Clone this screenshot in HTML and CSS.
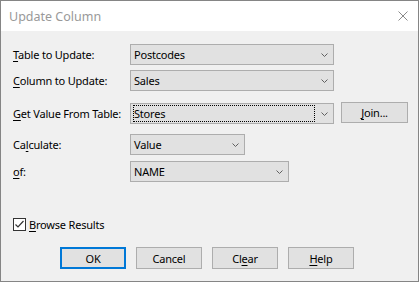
FILE: index.html
```html
<!DOCTYPE html>
<html>
<head>
<meta charset="utf-8">
<link rel="stylesheet" href="styles.css">
</head>
<body>
<div class="window">
  <div class="titlebar">
    <span class="title">Update Column</span>
    <svg class="close" width="10" height="10" viewBox="0 0 10 10"><path d="M0.5 0.5 L9.5 9.5 M9.5 0.5 L0.5 9.5" stroke="#8a8a8a" stroke-width="1" fill="none"/></svg>
  </div>
  <div class="content">
    <div class="row r1">
      <span class="lbl"><u>T</u>able to Update:</span>
      <div class="combo w-wide"><span class="val">Postcodes</span><svg class="chev" width="7" height="4" viewBox="0 0 7 4"><path d="M0.5 0.5 L3.5 3.5 L6.5 0.5" stroke="#606060" fill="none"/></svg></div>
    </div>
    <div class="row r2">
      <span class="lbl"><u>C</u>olumn to Update:</span>
      <div class="combo w-wide"><span class="val">Sales</span><svg class="chev" width="7" height="4" viewBox="0 0 7 4"><path d="M0.5 0.5 L3.5 3.5 L6.5 0.5" stroke="#606060" fill="none"/></svg></div>
    </div>
    <div class="row r3">
      <span class="lbl"><u>G</u>et Value From Table:</span>
      <div class="combo w-wide"><span class="val focus">Stores</span><svg class="chev" width="7" height="4" viewBox="0 0 7 4"><path d="M0.5 0.5 L3.5 3.5 L6.5 0.5" stroke="#606060" fill="none"/></svg></div>
      <button class="btn join"><u>J</u>oin...</button>
    </div>
    <div class="row r4">
      <span class="lbl">Ca<u>l</u>culate:</span>
      <div class="combo w-small"><span class="val">Value</span><svg class="chev" width="7" height="4" viewBox="0 0 7 4"><path d="M0.5 0.5 L3.5 3.5 L6.5 0.5" stroke="#606060" fill="none"/></svg></div>
    </div>
    <div class="row r5">
      <span class="lbl"><u>o</u>f:</span>
      <div class="combo w-mid"><span class="val">NAME</span><svg class="chev" width="7" height="4" viewBox="0 0 7 4"><path d="M0.5 0.5 L3.5 3.5 L6.5 0.5" stroke="#606060" fill="none"/></svg></div>
    </div>
    <div class="check-row">
      <span class="checkbox"><svg width="11" height="11" viewBox="0 0 11 11"><path d="M1.5 5.5 L4 8 L9.5 2" stroke="#333" stroke-width="1.2" fill="none"/></svg></span>
      <span class="check-lbl"><u>B</u>rowse Results</span>
    </div>
    <div class="buttons">
      <button class="btn default">OK</button>
      <button class="btn">Cancel</button>
      <button class="btn">Cl<u>e</u>ar</button>
      <button class="btn"><u>H</u>elp</button>
    </div>
  </div>
</div>
</body>
</html>
```
FILE: styles.css
```css
* { box-sizing: border-box; }
html, body { margin: 0; padding: 0; }
body {
  font-family: "Noto Sans", "Open Sans", sans-serif;
  font-size: 11px;
  letter-spacing: -0.2px;
  color: #000;
  background: #7a6a5a;
}
.window {
  width: 419px;
  height: 282px;
  border: 1px solid #858585;
  background: #f0f0f0;
  display: flex;
  flex-direction: column;
}
.titlebar {
  height: 30px;
  background: #fff;
  display: flex;
  align-items: center;
  justify-content: space-between;
  padding: 0 10px 0 8px;
  flex: none;
}
.title {
  color: #999;
  font-size: 12.5px;
  letter-spacing: 0;
}
.content {
  padding: 13px 0 0 12px;
  flex: 1;
}
.row {
  display: flex;
  align-items: center;
  height: 21px;
}
.r2 { margin-top: 5px; }
.r3 { margin-top: 12px; }
.r4 { margin-top: 10px; }
.r5 { margin-top: 6px; }
.lbl {
  width: 117px;
  flex: none;
  white-space: nowrap;
}
u { text-decoration: underline; text-underline-offset: 2px; }
.combo {
  height: 21px;
  background: #e1e1e1;
  border: 1px solid #adadad;
  display: flex;
  align-items: center;
  justify-content: space-between;
  padding: 0 5px 0 2px;
  flex: none;
}
.w-wide { width: 204px; }
.w-small { width: 115px; }
.w-mid { width: 159px; }
.val {
  padding-left: 1px;
  line-height: 15px;
  white-space: nowrap;
}
.val.focus {
  width: 182px;
  height: 17px;
  border: 1px dotted #000;
  padding-left: 0;
}
.chev { flex: none; }
.btn {
  font: inherit;
  letter-spacing: inherit;
  color: #000;
  background: #e1e1e1;
  border: 1px solid #adadad;
  height: 22px;
  width: 66px;
  padding: 0;
  margin: 0;
}
.join {
  margin-left: 7px;
  height: 21px;
  width: 67px;
  margin-top: -2px;
}
.check-row {
  margin-top: 36px;
  display: flex;
  align-items: center;
  height: 13px;
}
.checkbox {
  width: 13px;
  height: 13px;
  border: 1px solid #333;
  background: #fff;
  display: flex;
  align-items: center;
  justify-content: center;
  flex: none;
}
.check-lbl { margin-left: 3px; }
.buttons {
  margin-top: 16px;
  padding-left: 47px;
  display: flex;
  gap: 10px;
}
.btn.default {
  border: 2px solid #0078d7;
}
```
